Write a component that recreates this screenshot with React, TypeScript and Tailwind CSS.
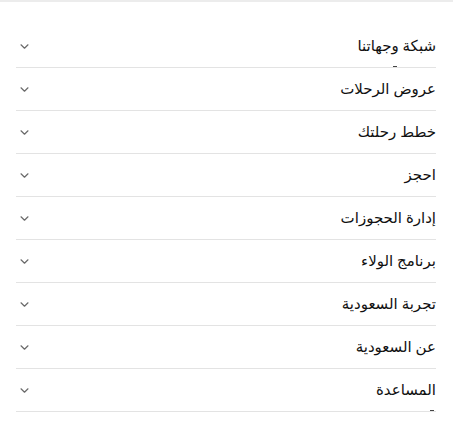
const items = [
  "شبكة وجهاتنا",
  "عروض الرحلات",
  "خطط رحلتك",
  "احجز",
  "إدارة الحجوزات",
  "برنامج الولاء",
  "تجربة السعودية",
  "عن السعودية",
  "المساعدة",
];

function Chevron() {
  return (
    <svg width="9" height="5" viewBox="0 0 9 5" fill="none" className="text-[#6b6b6b]">
      <path d="M1 0.8l3.5 3.4 3.5-3.4" stroke="currentColor" strokeWidth="1.2" strokeLinecap="round" strokeLinejoin="round" />
    </svg>
  );
}

export default function App() {
  return (
    <div className="w-[453px] h-[440px] bg-white border-t-2 border-[#ececec]" style={{ fontFamily: '"Noto Sans", "DejaVu Sans", sans-serif' }}>
      <ul dir="rtl" className="ml-4 mr-[17px] pt-[23px]">
        {items.map((label, i) => (
          <li key={label} className="relative h-[43px] border-b border-[#e3e3e3] flex items-center justify-between">
            <span className="text-[15px] font-medium text-[#111] leading-none pb-[2px]">{label}</span>
            <span className="pl-[4px]"><Chevron /></span>
            {(i === 0 || i === items.length - 1) && (
              <span className={`absolute bottom-0 h-[1px] w-[4px] bg-[#444] ${i === 0 ? "left-[377px]" : "left-[414px]"}`} />
            )}
          </li>
        ))}
      </ul>
    </div>
  );
}
